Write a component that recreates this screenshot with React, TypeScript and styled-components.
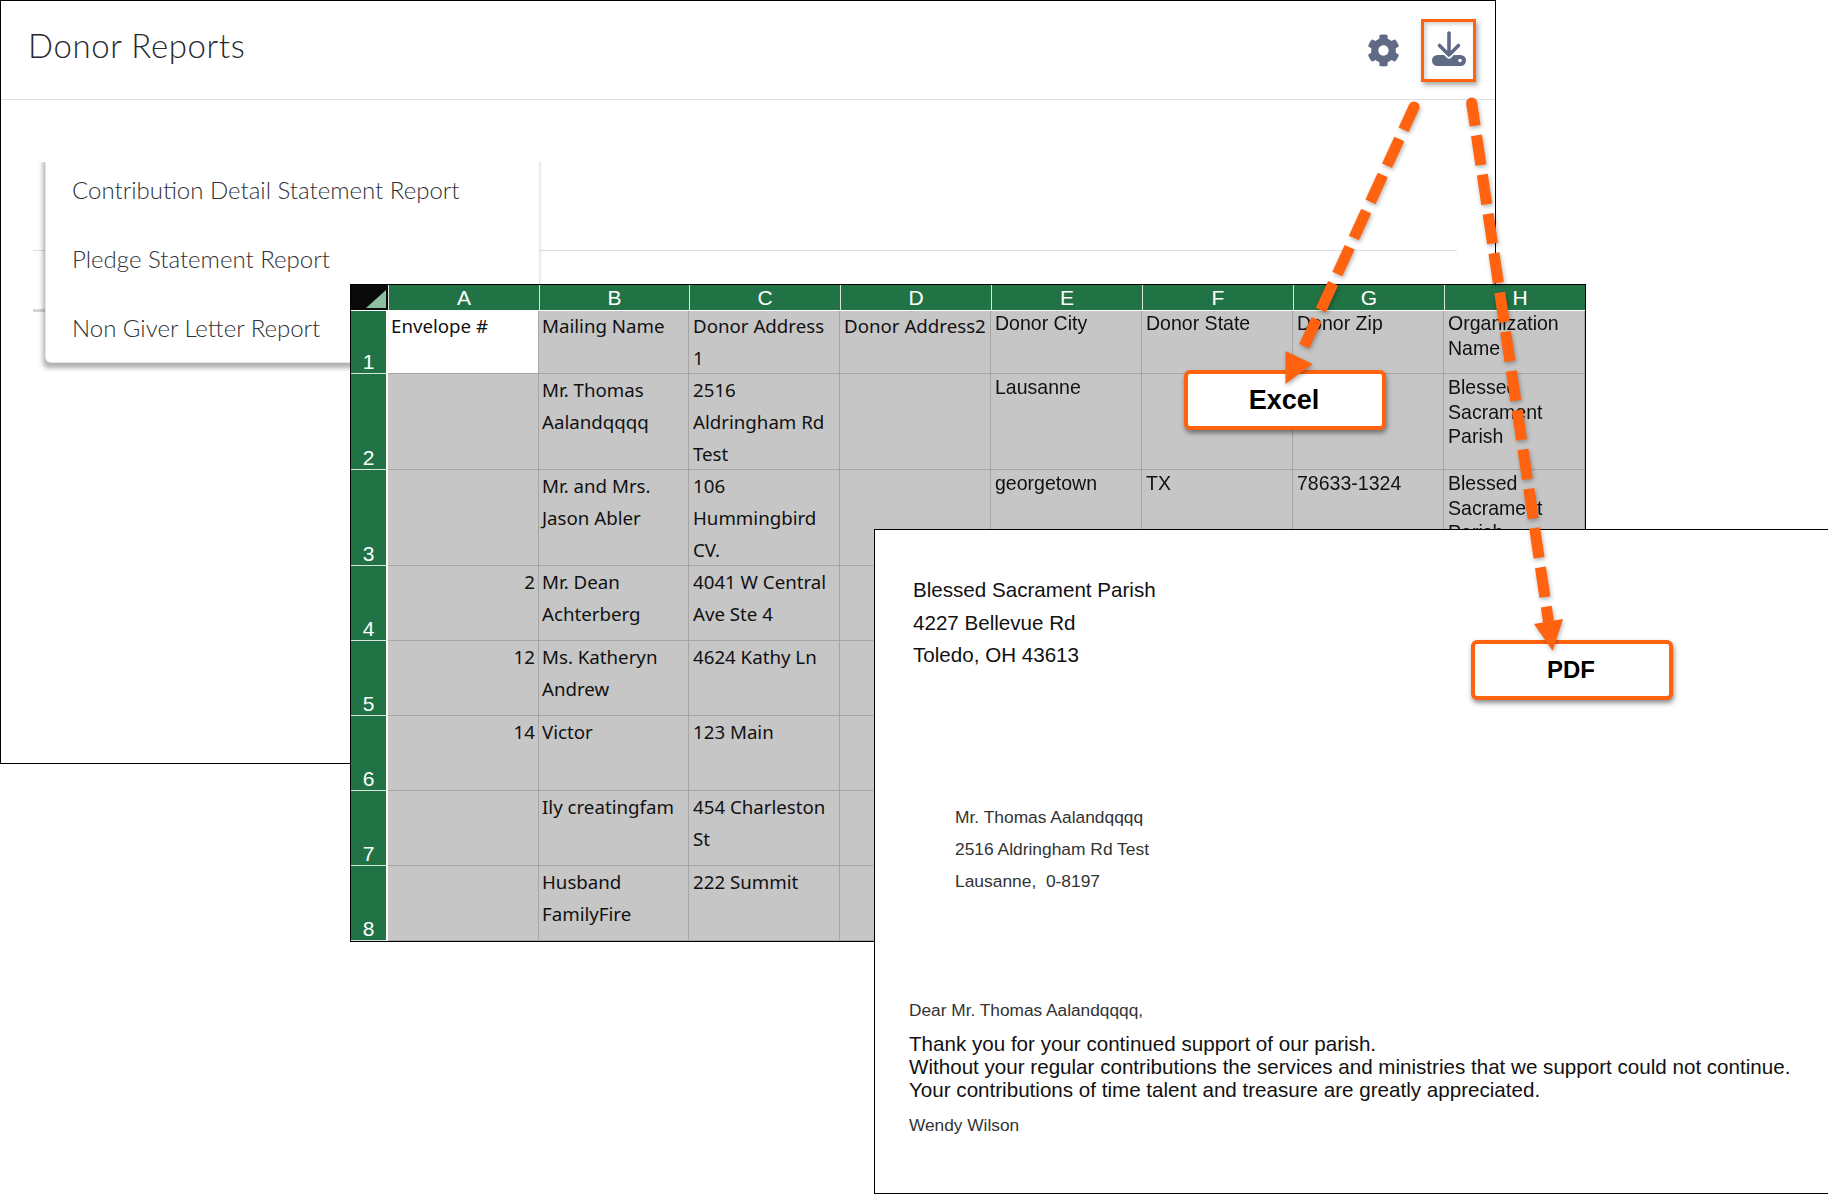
import React from "react";
import styled, { createGlobalStyle } from "styled-components";
import { FaCog } from "react-icons/fa";

const GlobalStyle = createGlobalStyle`
  html, body {
    margin: 0;
    padding: 0;
    background: #fff;
  }
`;

const orange = "#ff6310";

const Canvas = styled.div`
  position: relative;
  width: 1828px;
  height: 1194px;
  overflow: hidden;
  background: #fff;
`;

// app window at the back
const AppWindow = styled.div`
  position: absolute;
  left: 0;
  top: 0;
  width: 1496px;
  height: 764px;
  box-sizing: border-box;
  border: 1px solid #000;
  background: #fff;
  font-family: Lato, "Open Sans", sans-serif;
`;

const Header = styled.div`
  height: 99px;
  box-sizing: border-box;
  display: flex;
  align-items: center;
  justify-content: space-between;
  padding: 0 19px 10px 27px;
  border-bottom: 1px solid #e0e0e0;
`;

const Title = styled.h1`
  margin: 0;
  font-size: 33px;
  font-weight: 300;
  letter-spacing: 0.6px;
  color: #26292c;
`;

const HeaderIcons = styled.div`
  display: flex;
  align-items: center;
  gap: 21px;
  margin-top: 10px;
  color: #5f6a85;
`;

const HighlightBox = styled.div`
  width: 55px;
  height: 63px;
  box-sizing: border-box;
  display: flex;
  align-items: center;
  justify-content: center;
  border: 3px solid ${orange};
  box-shadow: 2px 3px 5px rgba(0, 0, 0, 0.35), inset 2px 2px 4px rgba(0, 0, 0, 0.2);
`;

const Body = styled.div`
  padding: 150px 38px 0 32px;
`;

const Divider = styled.div`
  height: 1px;
  background: #dedede;
`;

const ShortDivider = styled.div`
  height: 3px;
  width: 300px;
  margin-top: 58px;
  background: #d4d4d4;
`;

const Menu = styled.div`
  position: absolute;
  left: 44px;
  top: 154px;
  width: 495px;
  background: #fff;
  border-radius: 0 0 6px 6px;
  border: 1px solid #e4e4e4;
  border-top: none;
  box-sizing: border-box;
  box-shadow: -2px 5px 5px rgba(0, 0, 0, 0.32);
  clip-path: inset(7px -12px -12px -12px);
`;

const MenuItem = styled.div`
  height: 69px;
  display: flex;
  align-items: center;
  padding-left: 26px;
  font-size: 24px;
  font-weight: 300;
  color: #2e3135;
`;

// spreadsheet
const Sheet = styled.div`
  position: absolute;
  left: 350px;
  top: 284px;
  width: 1236px;
  display: grid;
  grid-template-columns: 37px 151px 150px 151px 151px 151px 151px 151px 141px;
  grid-template-rows: 26px 63px 96px 96px 75px 75px 75px 75px 75px;
  background: #c6c6c6;
  border: 1px solid #000;
  box-sizing: border-box;
  font-family: "Noto Sans", "Open Sans", sans-serif;
`;

const Corner = styled.div`
  background: #0a0a0a;
  display: flex;
  align-items: flex-end;
  justify-content: flex-end;
  padding: 0 2px 2px 0;
  border-bottom: 1px solid #fff;
`;

const ColHead = styled.div`
  background: #217346;
  color: #fff;
  display: flex;
  align-items: center;
  justify-content: center;
  font-family: "Liberation Sans", Arial, sans-serif;
  font-size: 21px;
  border-bottom: 1px solid #fff;
  border-left: 1px solid #d8e6dd;

  &:nth-child(9) {
    padding-left: 10px;
  }
`;

const RowHead = styled.div`
  background: #217346;
  color: #fff;
  display: flex;
  align-items: flex-end;
  justify-content: center;
  box-sizing: border-box;
  font-family: "Liberation Sans", Arial, sans-serif;
  font-size: 21px;
  line-height: 22px;
  border-bottom: 1px solid #d8e6dd;
  border-right: 2px solid #fff;
`;

const Cell = styled.div<{ $right?: boolean; $white?: boolean; $indent: number }>`
  overflow: hidden;
  box-sizing: border-box;
  white-space: pre;
  padding: 0 3px 0 ${(p) => p.$indent}px;
  color: #111;
  background: ${(p) => (p.$white ? "#fff" : "#c6c6c6")};
  border-right: 1px solid #a6a6a6;
  border-bottom: 1px solid #a6a6a6;
  text-align: ${(p) => (p.$right ? "right" : "left")};
`;

const WideText = styled.div<{ $shift: number }>`
  margin-top: ${(p) => p.$shift}px;
  font-family: "Noto Sans", sans-serif;
  font-size: 18.7px;
  line-height: 32px;
`;

// Arial Narrow look, no narrow family is installed
const NarrowText = styled.div<{ $shift: number }>`
  margin-top: ${(p) => p.$shift}px;
  font-family: "Liberation Sans", sans-serif;
  font-size: 21px;
  line-height: 24.7px;
  transform: scaleX(0.93);
  transform-origin: left top;
`;

// pdf letter on top
const Letter = styled.div`
  position: absolute;
  left: 874px;
  top: 529px;
  width: 960px;
  height: 665px;
  box-sizing: border-box;
  padding: 44px 0 0 34px;
  border: 1px solid #000;
  background: #fff;
  color: #111;
  font-family: "Liberation Sans", Arial, sans-serif;
`;

const SenderBlock = styled.div`
  margin-left: 4px;
  font-size: 20.6px;
  line-height: 32.6px;
`;

const RecipientBlock = styled.div`
  margin: 129px 0 0 46px;
  font-size: 17.4px;
  line-height: 32px;
  color: #333;
`;

const SmallLine = styled.div<{ $top: number }>`
  margin-top: ${(p) => p.$top}px;
  font-size: 17.3px;
  line-height: 20px;
  color: #333;
`;

const BodyText = styled.div`
  margin-top: 12px;
  font-size: 20.6px;
  line-height: 23px;
`;

const Callout = styled.div<{ $size: number; $left: number; $top: number }>`
  position: absolute;
  left: ${(p) => p.$left}px;
  top: ${(p) => p.$top}px;
  width: 202px;
  height: 60px;
  box-sizing: border-box;
  display: flex;
  align-items: center;
  justify-content: center;
  padding-right: 2px;
  background: #fff;
  border: 4px solid ${orange};
  border-radius: 6px;
  box-shadow: 1px 3px 5px rgba(0, 0, 0, 0.45);
  color: #000;
  font-family: "Liberation Sans", Arial, sans-serif;
  font-weight: 700;
  font-size: ${(p) => p.$size}px;
`;

const ArrowLayer = styled.svg`
  position: absolute;
  left: 0;
  top: 0;
  pointer-events: none;
  filter: drop-shadow(1px 2px 2px rgba(0, 0, 0, 0.3));
`;

const DownloadIcon = () => (
  <svg width="36" height="38" viewBox="0 0 36 38">
    <rect x="1" y="24" width="34" height="11" rx="5.5" fill="#5f6a85" />
    <path d="M18 2v22M8 14l10 10 10-10" fill="none" stroke="#fff" strokeWidth="7" strokeLinejoin="round" />
    <path d="M18 2v22M8.500 14.500l9.500 9.500 9.500-9.500" fill="none" stroke="#5f6a85" strokeWidth="3.600" strokeLinecap="round" strokeLinejoin="round" />
    <circle cx="29" cy="29.500" r="1.800" fill="#fff" />
  </svg>
);

const columns = ["A", "B", "C", "D", "E", "F", "G", "H"];

const rows: string[][] = [
  ["Envelope #", "Mailing Name", "Donor Address\n1", "Donor Address2", "Donor City", "Donor State", "Donor Zip", "Organization\nName"],
  ["", "Mr. Thomas\nAalandqqqq", "2516\nAldringham Rd\nTest", "", "Lausanne", "", "", "Blessed\nSacrament\nParish"],
  ["", "Mr. and Mrs.\nJason Abler", "106\nHummingbird\nCV.", "", "georgetown", "TX", "78633-1324", "Blessed\nSacrament\nParish"],
  ["2", "Mr. Dean\nAchterberg", "4041 W Central\nAve Ste 4", "", "", "", "", ""],
  ["12", "Ms. Katheryn\nAndrew", "4624 Kathy Ln", "", "", "", "", ""],
  ["14", "Victor", "123 Main", "", "", "", "", ""],
  ["", "Ily creatingfam", "454 Charleston\nSt", "", "", "", "", ""],
  ["", "Husband\nFamilyFire", "222 Summit", "", "", "", "", ""],
];

const App = () => (
  <Canvas>
    <GlobalStyle />

    <AppWindow>
      <Header>
        <Title>Donor Reports</Title>
        <HeaderIcons>
          <FaCog size={33} />
          <HighlightBox>
            <DownloadIcon />
          </HighlightBox>
        </HeaderIcons>
      </Header>
      <Body>
        <Divider />
        <ShortDivider />
      </Body>
      <Menu>
        <MenuItem>Contribution Detail Statement Report</MenuItem>
        <MenuItem>Pledge Statement Report</MenuItem>
        <MenuItem>Non Giver Letter Report</MenuItem>
      </Menu>
    </AppWindow>

    <Sheet>
      <Corner>
        <svg width="20" height="18" viewBox="0 0 20 18">
          <path d="M20 0v18H0z" fill="#8cbf9f" />
        </svg>
      </Corner>
      {columns.map((c) => (
        <ColHead key={c}>{c}</ColHead>
      ))}
      {rows.map((row, r) => (
        <React.Fragment key={r}>
          <RowHead>{r + 1}</RowHead>
          {row.map((text, c) => (
            <Cell key={c} $indent={c >= 2 ? 4 : 3} $right={c === 0 && r > 0} $white={r === 0 && c === 0}>
              {c >= 4 ? (
                <NarrowText $shift={r === 0 ? 0 : 1}>{text}</NarrowText>
              ) : (
                <WideText $shift={r === 0 ? -1 : 0}>{text}</WideText>
              )}
            </Cell>
          ))}
        </React.Fragment>
      ))}
    </Sheet>

    <Letter>
      <SenderBlock>
        <div>Blessed Sacrament Parish</div>
        <div>4227 Bellevue Rd</div>
        <div>Toledo, OH 43613</div>
      </SenderBlock>
      <RecipientBlock>
        <div>Mr. Thomas Aalandqqqq</div>
        <div>2516 Aldringham Rd Test</div>
        <div>Lausanne,&nbsp; 0-8197</div>
      </RecipientBlock>
      <SmallLine $top={103}>Dear Mr. Thomas Aalandqqqq,</SmallLine>
      <BodyText>
        <div>Thank you for your continued support of our parish.</div>
        <div>Without your regular contributions the services and ministries that we support could not continue.</div>
        <div>Your contributions of time talent and treasure are greatly appreciated.</div>
      </BodyText>
      <SmallLine $top={14}>Wendy Wilson</SmallLine>
    </Letter>

    <Callout $size={27} $left={1184} $top={370}>Excel</Callout>
    <Callout $size={24} $left={1471} $top={640}>PDF</Callout>

    <ArrowLayer width="1828" height="1194" viewBox="0 0 1828 1194">
      <g stroke={orange} strokeWidth="11" fill="none">
        <path d="M1414 107L1303.300 348.300" strokeDasharray="29.500 10.200" strokeDashoffset="4.500" />
        <path d="M1471.700 103L1549 625" strokeDasharray="30 9.700" strokeDashoffset="7" />
      </g>
      <circle cx="1414" cy="107" r="5.500" fill={orange} />
      <circle cx="1471.700" cy="103" r="5.500" fill={orange} />
      <path d="M1285.500 351L1312.500 364L1285.500 384z" fill={orange} />
      <path d="M1534 624L1563 619L1552.700 650.700z" fill={orange} />
    </ArrowLayer>
  </Canvas>
);

export default App;
